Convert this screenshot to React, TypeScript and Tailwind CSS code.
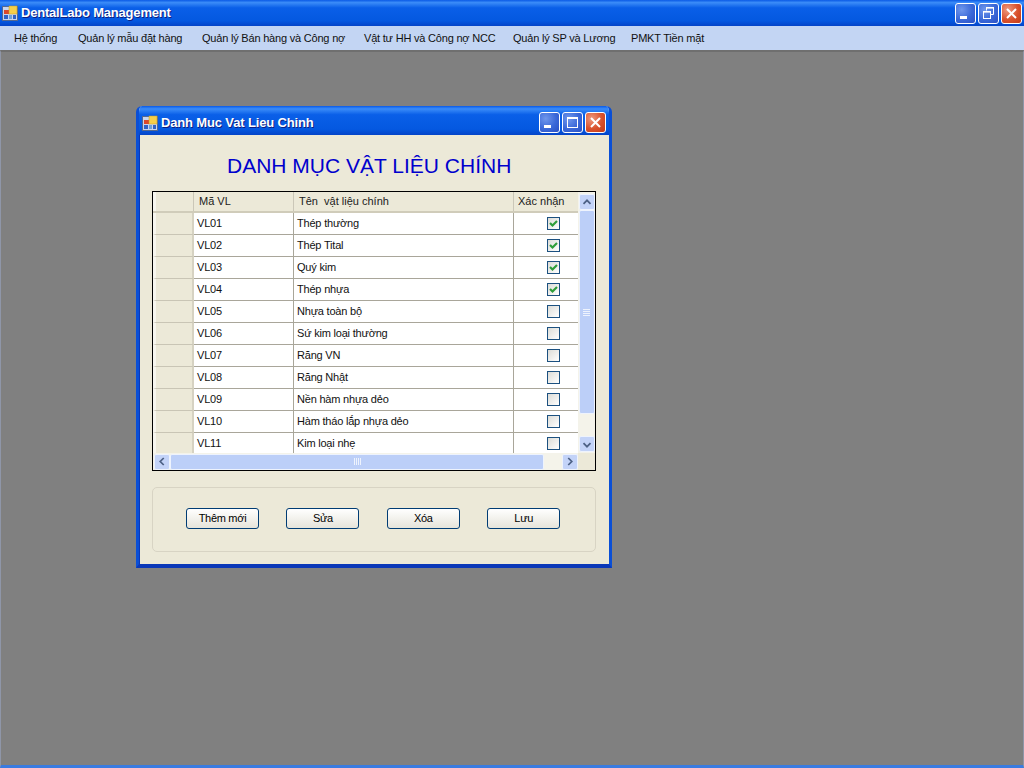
import type { ReactNode } from 'react';

const MENUS = [
  { label: 'Hệ thống', w: 'w-[64px]' },
  { label: 'Quản lý mẫu đặt hàng', w: 'w-[124px]' },
  { label: 'Quản lý Bán hàng và Công nợ', w: 'w-[162px]' },
  { label: 'Vật tư HH và Công nợ NCC', w: 'w-[149px]' },
  { label: 'Quản lý SP và Lương', w: 'w-[118px]' },
  { label: 'PMKT Tiền mặt', w: 'w-[80px]' },
];

const ROWS = [
  { id: 'VL01', name: 'Thép thường', ok: true },
  { id: 'VL02', name: 'Thép Tital', ok: true },
  { id: 'VL03', name: 'Quý kim', ok: true },
  { id: 'VL04', name: 'Thép nhựa', ok: true },
  { id: 'VL05', name: 'Nhựa toàn bộ', ok: false },
  { id: 'VL06', name: 'Sứ kim loại thường', ok: false },
  { id: 'VL07', name: 'Răng VN', ok: false },
  { id: 'VL08', name: 'Răng Nhật', ok: false },
  { id: 'VL09', name: 'Nền hàm nhựa dẻo', ok: false },
  { id: 'VL10', name: 'Hàm tháo lắp nhựa dẻo', ok: false },
  { id: 'VL11', name: 'Kim loại nhẹ', ok: false },
];

function AppIcon() {
  return (
    <svg width="16" height="16" viewBox="0 0 16 16" className="shrink-0">
      <rect x="0.5" y="1.5" width="15" height="14" fill="#c9d5ee" stroke="#55698f" />
      <rect x="2" y="5" width="5" height="4" fill="#d9482b" />
      <rect x="7" y="1" width="8" height="8" fill="#f6cf4a" stroke="#c89a24" strokeWidth="0.5" />
      <rect x="2" y="10" width="4" height="4" fill="#2f62c8" />
      <rect x="7" y="10" width="3" height="4" fill="#6fa0d8" />
      <rect x="11" y="10" width="3" height="4" fill="#2f62c8" />
    </svg>
  );
}

function CaptionButton({ kind }: { kind: 'min' | 'max' | 'restore' | 'close' }) {
  const bg =
    kind === 'close'
      ? 'bg-[radial-gradient(circle_at_30%_30%,#ee9a80,#d9512c_55%,#c23a17)]'
      : 'bg-[radial-gradient(circle_at_30%_30%,#6f97ec,#3a68d8_55%,#2a50c4)]';
  return (
    <div className={`flex h-[21px] w-[21px] items-center justify-center rounded-[3px] border border-white ${bg}`}>
      <svg width="19" height="19" viewBox="0 0 19 19" fill="none" stroke="white">
        {kind === 'min' && <rect x="4" y="12" width="7" height="3" fill="white" stroke="none" />}
        {kind === 'max' && (
          <>
            <rect x="4.5" y="4.5" width="10" height="10" strokeWidth="1" />
            <rect x="4" y="4" width="11" height="2" fill="white" stroke="none" />
          </>
        )}
        {kind === 'restore' && (
          <>
            <path d="M7.5 6.5V3.5H14.5V10.5H11.5" strokeWidth="1" />
            <rect x="7" y="3" width="8" height="1.6" fill="white" stroke="none" />
            <rect x="4.5" y="7.5" width="7" height="7" strokeWidth="1" />
            <rect x="4" y="7" width="8" height="1.6" fill="white" stroke="none" />
          </>
        )}
        {kind === 'close' && <path d="M5 5L14 14M14 5L5 14" strokeWidth="2" />}
      </svg>
    </div>
  );
}

function ScrollButton({ dir }: { dir: 'up' | 'down' | 'left' | 'right' }) {
  const d = {
    up: 'M4 9L8 5L12 9',
    down: 'M4 6L8 10L12 6',
    left: 'M10 3.5L6 7.5L10 11.5',
    right: 'M6 3.5L10 7.5L6 11.5',
  }[dir];
  return (
    <div className="flex h-[16px] w-[16px] shrink-0 items-center justify-center rounded-[2px] border border-[#eef3fd] bg-[#c3d3f8]">
      <svg width="16" height="15" viewBox="0 0 16 15" fill="none" stroke="#4d6185" strokeWidth="2">
        <path d={d} />
      </svg>
    </div>
  );
}

function Grip({ vertical }: { vertical?: boolean }) {
  const lines = [0, 1, 2, 3];
  return (
    <div className={`flex ${vertical ? 'flex-col' : ''} gap-[1px]`}>
      {lines.map((n) => (
        <div key={n} className={vertical ? 'h-[1px] w-[7px] bg-[#eef3fd]' : 'h-[7px] w-[1px] bg-[#eef3fd]'} />
      ))}
    </div>
  );
}

function Check({ on }: { on: boolean }) {
  return (
    <div className="flex h-[13px] w-[13px] items-center justify-center border border-[#1c5180] bg-gradient-to-br from-[#dcdcd7] to-white">
      {on && (
        <svg width="11" height="11" viewBox="0 0 11 11" fill="none" stroke="#2f9e3a" strokeWidth="2.2">
          <path d="M2 5L4.5 7.5L9 3" />
        </svg>
      )}
    </div>
  );
}

function HeaderCell({ w, children }: { w: string; children?: ReactNode }) {
  return <div className={`flex h-full items-center border-r border-[#cbc7b8] ${w}`}>{children}</div>;
}

function XpButton({ label }: { label: string }) {
  return (
    <button className="h-[21px] w-[73px] rounded-[3px] border border-[#003c74] bg-gradient-to-b from-white to-[#e6e4da] text-[11px] tracking-[-0.3px] text-black">
      {label}
    </button>
  );
}

function MaterialGrid() {
  return (
    <div className="flex h-[280px] w-[444px] flex-col border border-black bg-[#f4f3ea]">
      <div className="flex min-h-0 flex-1">
        <div className="flex min-w-0 flex-1 flex-col overflow-hidden">
          <div className="flex h-[21px] shrink-0 items-center border-b-2 border-[#d0ccba] bg-[#ece9d8] text-[11px] text-[#222]">
            <HeaderCell w="w-[41px] border-l-[3px] border-l-[#f7f6ef]" />
            <HeaderCell w="w-[100px] pl-[5px]">Mã VL</HeaderCell>
            <HeaderCell w="w-[220px] pl-[5px]">Tên &nbsp;vật liệu chính</HeaderCell>
            <div className="pl-[4px]">Xác nhận</div>
          </div>
          {ROWS.map((r) => (
            <div key={r.id} className="flex h-[22px] shrink-0 text-[11px] tracking-[-0.2px] text-[#111]">
              <div className="h-full w-[41px] shrink-0 border-l-[3px] border-r-2 border-b border-l-[#f7f6ef] border-r-[#d6d2c2] border-b-[#c9c5b5] bg-[#ece9d8]" />
              <div className="flex h-full w-[100px] shrink-0 items-center border-r border-b border-[#a9a69a] bg-white pl-[3px]">
                {r.id}
              </div>
              <div className="flex h-full w-[220px] shrink-0 items-center border-r border-b border-[#a9a69a] bg-white pl-[3px]">
                {r.name}
              </div>
              <div className="flex h-full flex-1 items-center justify-center border-b border-[#a9a69a] bg-white pl-[15px]">
                <Check on={r.ok} />
              </div>
            </div>
          ))}
        </div>
        <div className="flex w-[17px] shrink-0 flex-col items-center bg-[#f4f3ea] pb-[1px] pt-[2px]">
          <ScrollButton dir="up" />
          <div className="flex h-[204px] w-[16px] shrink-0 items-center justify-center rounded-[2px] border border-[#eef3fd] bg-[#bccff8]">
            <Grip vertical />
          </div>
          <div className="flex-1" />
          <ScrollButton dir="down" />
        </div>
      </div>
      <div className="flex h-[17px] shrink-0 items-center bg-[#f4f3ea] pl-[1px]">
        <ScrollButton dir="left" />
        <div className="flex h-[16px] w-[374px] shrink-0 items-center justify-center rounded-[2px] border border-[#eef3fd] bg-[#bccff8]">
          <Grip />
        </div>
        <div className="flex-1" />
        <ScrollButton dir="right" />
        <div className="h-full w-[17px] shrink-0 bg-[#ece9d8]" />
      </div>
    </div>
  );
}

function ChildWindow() {
  return (
    <div className="absolute left-[135px] top-[54px] flex h-[462px] w-[476px] flex-col overflow-hidden rounded-t-[6px] border-x-[3px] border-b-[4px] border-x-[#0a4fd6] border-b-[#0a38b8] bg-[#ece9d8]">
      <div className="flex h-[29px] shrink-0 items-center bg-[linear-gradient(to_bottom,#0a5ae6,#3b8cf8_10%,#0a5fe8_30%,#0458e0_80%,#0444c8)] pl-[3px] pr-[3px] pt-[4px]">
        <AppIcon />
        <span className="ml-[3px] flex-1 pt-[1px] text-[13px] font-bold tracking-[-0.15px] text-white [text-shadow:1px_1px_#0f1e80]">
          Danh Muc Vat Lieu Chinh
        </span>
        <div className="flex gap-[2px]">
          <CaptionButton kind="min" />
          <CaptionButton kind="max" />
          <CaptionButton kind="close" />
        </div>
      </div>
      <div className="flex flex-1 flex-col border-l border-[#0a38b8] pl-[12px]">
        <h1 className="pb-[14px] pl-[75px] pt-[19px] text-[21px] leading-[23px] text-[#0000cd]">DANH MỤC VẬT LIỆU CHÍNH</h1>
        <MaterialGrid />
        <div className="mt-[16px] flex h-[65px] w-[444px] items-center gap-[27.4px] rounded-[5px] border border-[#d8d4c4] pb-[2px] pl-[33px]">
          <XpButton label="Thêm mới" />
          <XpButton label="Sửa" />
          <XpButton label="Xóa" />
          <XpButton label="Lưu" />
        </div>
      </div>
    </div>
  );
}

export default function App() {
  return (
    <div className="flex h-[768px] w-[1024px] flex-col overflow-hidden font-['Liberation_Sans',sans-serif]">
      <div className="flex h-[26px] shrink-0 items-center bg-[linear-gradient(to_bottom,#0a5ae6,#3b8cf8_10%,#0a5fe8_30%,#0458e0_80%,#0444c8)] pl-[2px] pr-[2px]">
        <AppIcon />
        <span className="ml-[3px] flex-1 text-[13px] font-bold tracking-[-0.2px] text-white [text-shadow:1px_1px_#0f1e80]">
          DentalLabo Management
        </span>
        <div className="flex gap-[2px]">
          <CaptionButton kind="min" />
          <CaptionButton kind="restore" />
          <CaptionButton kind="close" />
        </div>
      </div>
      <div className="flex h-[24px] shrink-0 items-center bg-[#c3d5f3] pl-[14px] pt-[1px] text-[11px] tracking-[-0.2px] text-[#111]">
        {MENUS.map((m) => (
          <span key={m.label} className={m.w}>
            {m.label}
          </span>
        ))}
      </div>
      <div className="relative flex-1 border-x border-t-2 border-b-[3px] border-x-[#8f96a8] border-t-[#6f6f6f] border-b-[#3a7be0] bg-[#808080]">
        <ChildWindow />
      </div>
    </div>
  );
}
